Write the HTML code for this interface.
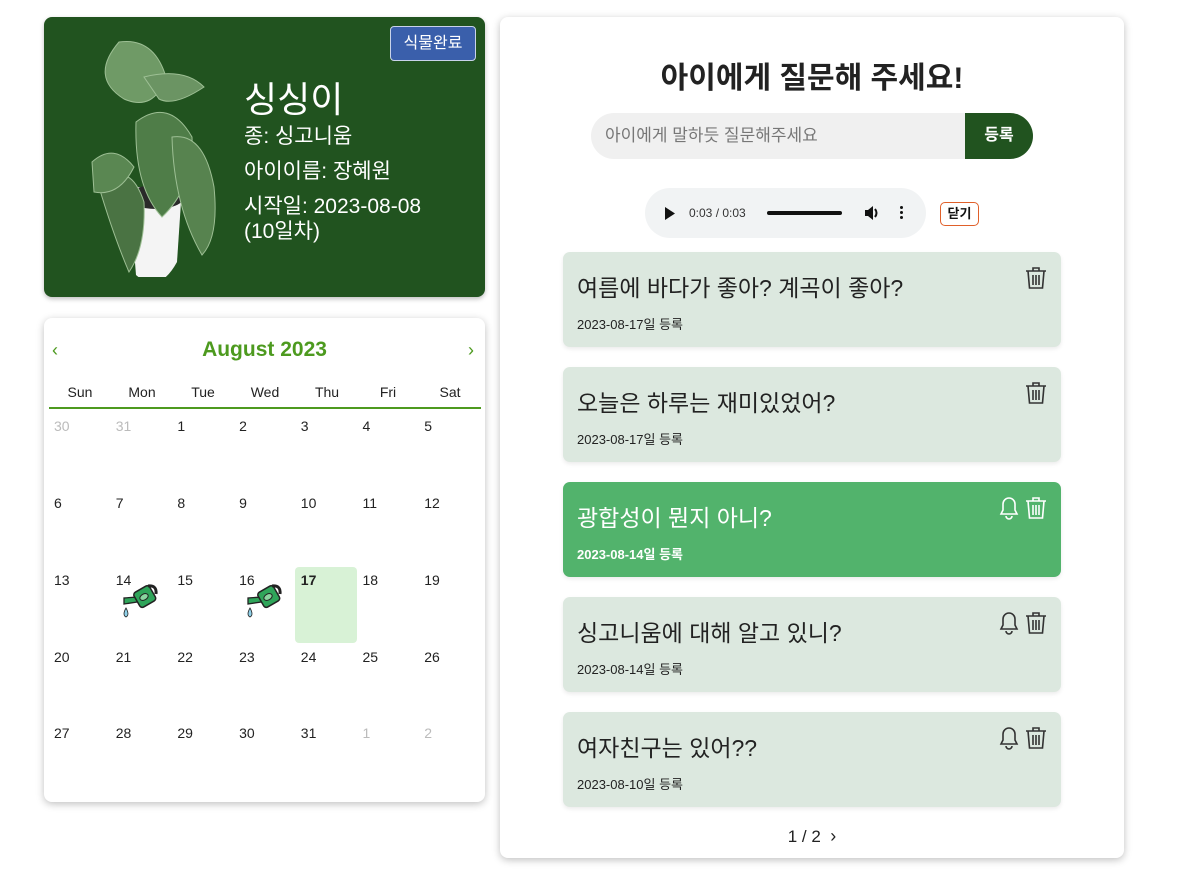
<!DOCTYPE html>
<html><head><meta charset="utf-8"><style>
*{box-sizing:border-box;margin:0;padding:0}
body{width:1198px;height:883px;background:#fff;font-family:"Liberation Sans","Noto Sans CJK KR",sans-serif;position:relative;overflow:hidden;color:#222}
.abs{position:absolute}
.card1{left:44px;top:17px;width:441px;height:280px;background:#21531f;border-radius:8px;box-shadow:0 2px 5px rgba(0,0,0,.25)}
.cal{left:44px;top:318px;width:441px;height:484px;background:#fff;border-radius:8px;box-shadow:0 2px 8px rgba(0,0,0,.25)}
.right{left:500px;top:17px;width:624px;height:841px;background:#fff;border-radius:8px;box-shadow:0 2px 8px rgba(0,0,0,.25)}
.q{left:563px;width:498px;height:95px;background:#dce8df;border-radius:7px;box-shadow:0 2px 4px rgba(0,0,0,.08)}
.q .t{position:absolute;left:14px;top:17px;font-size:23px;color:#222}
.q .d{position:absolute;left:14px;top:62px;font-size:13px;color:#222}
.q.on{background:#52b36c}
.q.on .t,.q.on .d{color:#fff}
.q.on .d{font-weight:bold}
.ic{position:absolute;top:14px}
.num{position:absolute;font-size:14px;color:#222}
.dh{position:absolute;top:384px;font-size:14px;color:#222;width:62px;text-align:center}
</style></head><body>
<div class="abs card1">
<svg class="abs" style="left:30px;top:20px" width="150" height="240" viewBox="0 0 150 240">
<path d="M55 150 L108 150 L103 225 Q85 258 62 238 Z" fill="#f4f4f4"/>
<ellipse cx="82" cy="160" rx="28" ry="12" fill="#2a2a2a"/>
<g stroke="#9dbf94" stroke-width="1">
<path d="M45 5 Q80 0 92 40 Q80 75 50 62 Q15 40 45 5Z" fill="#6f9a66"/>
<path d="M70 40 Q110 30 130 50 Q100 70 85 62Z" fill="#6b9463"/>
<path d="M62 85 Q95 60 118 100 Q120 150 88 180 Q60 150 62 85Z" fill="#4f7d48"/>
<path d="M98 100 Q130 95 140 150 Q145 200 128 218 Q100 170 98 100Z" fill="#57834f"/>
<path d="M25 150 Q55 120 70 165 Q72 210 55 235 Q40 200 25 150Z" fill="#4a7343"/>
<path d="M18 125 Q40 105 60 130 Q45 160 20 155Z" fill="#5a8752"/>
</g></svg>
<div class="abs" style="left:346px;top:9px;width:86px;height:35px;background:#3a5fab;border:1px solid #c9d3ea;border-radius:4px;color:#fff;font-size:16px;text-align:center;line-height:33px">식물완료</div>
<div class="abs" style="left:200px;top:54px;color:#fff;font-size:36px">싱싱이</div>
<div class="abs" style="left:200px;top:102px;color:#fff;font-size:21px;line-height:35px">종: 싱고니움<br>아이이름: 장혜원<br><span style="line-height:25px;display:inline-block;margin-top:5px">시작일: 2023-08-08<br>(10일차)</span></div>
</div>
<div class="abs cal">
<div class="abs" style="left:8px;top:22px;color:#4d9a1f;font-size:18px">‹</div>
<div class="abs" style="left:424px;top:22px;color:#4d9a1f;font-size:18px">›</div>
<div class="abs" style="left:0;width:441px;top:20px;text-align:center;color:#4d9a1f;font-size:21px;font-weight:bold">August 2023</div>
<div class="abs" style="left:5px;top:89px;width:432px;height:2px;background:#4d9a1f"></div>
</div>
<div class="dh" style="left:49px">Sun</div><div class="dh" style="left:111px">Mon</div><div class="dh" style="left:172px">Tue</div><div class="dh" style="left:234px">Wed</div><div class="dh" style="left:296px">Thu</div><div class="dh" style="left:357px">Fri</div><div class="dh" style="left:419px">Sat</div>
<div class="abs" style="left:295px;top:567px;width:62px;height:76px;background:#d8f2d6;border-radius:4px"></div>
<div id="nums"></div>
<svg class="abs" style="left:121px;top:582px" width="40" height="42" viewBox="0 0 40 42"><path d="M3 16 L3 22 L16 20 L17 15 Z" fill="#2fa55a" stroke="#222" stroke-width="1.3"/><rect x="15" y="6" width="18" height="17" rx="3" transform="rotate(-30 24 15)" fill="#2fa55a" stroke="#222" stroke-width="1.5"/><path d="M27 4 Q36 3 35 12" stroke="#222" stroke-width="3" fill="none"/><ellipse cx="23" cy="15" rx="4.5" ry="3" transform="rotate(-30 23 15)" fill="#8ad59f" stroke="#222"/><path d="M5 26 Q1 33 5 35 Q9 33 5 26Z" fill="#8fd0e8" stroke="#222" stroke-width=".8"/></svg>
<svg class="abs" style="left:245px;top:582px" width="40" height="42" viewBox="0 0 40 42"><path d="M3 16 L3 22 L16 20 L17 15 Z" fill="#2fa55a" stroke="#222" stroke-width="1.3"/><rect x="15" y="6" width="18" height="17" rx="3" transform="rotate(-30 24 15)" fill="#2fa55a" stroke="#222" stroke-width="1.5"/><path d="M27 4 Q36 3 35 12" stroke="#222" stroke-width="3" fill="none"/><ellipse cx="23" cy="15" rx="4.5" ry="3" transform="rotate(-30 23 15)" fill="#8ad59f" stroke="#222"/><path d="M5 26 Q1 33 5 35 Q9 33 5 26Z" fill="#8fd0e8" stroke="#222" stroke-width=".8"/></svg>
<div class="abs right">
<div class="abs" style="left:0;width:624px;top:36px;text-align:center;font-size:30px;font-weight:bold;color:#222">아이에게 질문해 주세요!</div>
<div class="abs" style="left:91px;top:96px;width:375px;height:46px;background:#f0f0f0;border-radius:23px 0 0 23px;color:#777;font-size:17px;line-height:46px;padding-left:14px">아이에게 말하듯 질문해주세요</div>
<div class="abs" style="left:465px;top:96px;width:68px;height:46px;background:#21531f;border-radius:0 23px 23px 0;color:#fff;font-size:16px;font-weight:bold;line-height:46px;text-align:center">등록</div>
<div class="abs" style="left:145px;top:171px;width:281px;height:50px;background:#f1f3f4;border-radius:25px">
<svg class="abs" style="left:19px;top:19px" width="12" height="13"><path d="M1 0 L11 6.5 L1 13Z" fill="#111"/></svg>
<div class="abs" style="left:44px;top:18px;font-size:12px;color:#333">0:03 / 0:03</div>
<div class="abs" style="left:122px;top:23px;width:75px;height:4px;background:#111;border-radius:2px"></div>
<svg class="abs" style="left:219px;top:17px" width="16" height="16" viewBox="0 0 16 16"><path d="M1 5h3l5-4v14l-5-4H1Z" fill="#111"/><path d="M11 4q3 4 0 8" stroke="#111" stroke-width="2" fill="none"/></svg>
<div class="abs" style="left:255px;top:18px;width:3px;line-height:5px;font-size:0"><div style="width:3px;height:3px;background:#111;border-radius:50%;margin-bottom:2px"></div><div style="width:3px;height:3px;background:#111;border-radius:50%;margin-bottom:2px"></div><div style="width:3px;height:3px;background:#111;border-radius:50%"></div></div>
</div>
<div class="abs" style="left:440px;top:185px;width:39px;height:24px;border:1px solid #e0602a;border-radius:5px;font-size:13px;font-weight:bold;text-align:center;line-height:22px;color:#111">닫기</div>
<div class="abs" style="left:0;width:624px;top:809px;text-align:center;font-size:17px;color:#222">1 / 2 &nbsp;<span style="font-size:18px">›</span></div>
</div>
<div id="qs"></div>
<script>
var n=document.getElementById('nums'),h='';
var rows=[[30,31,1,2,3,4,5],[6,7,8,9,10,11,12],[13,14,15,16,17,18,19],[20,21,22,23,24,25,26],[27,28,29,30,31,1,2]];
var ys=[418,495,572,649,725];
rows.forEach(function(r,i){r.forEach(function(d,j){var g=(i==0&&j<2)||(i==4&&j>4);h+='<div class="num" style="left:'+(54+j*61.7)+'px;top:'+ys[i]+'px;color:'+(g?'#bbb':'#222')+(d==17&&i==2?';font-weight:bold':'')+'">'+d+'</div>';});});
n.innerHTML=h;
var trash='<svg class="ic" style="right:14px" width="22" height="24" viewBox="0 0 22 24" fill="none" stroke="COL" stroke-width="1.6"><path d="M1 5h20M8 5V2h6v3M3 5l1.5 17h13L19 5M8 9v10M11 9v10M14 9v10"/></svg>';
var bell='<svg class="ic" style="right:42px" width="20" height="24" viewBox="0 0 20 24" fill="none" stroke="COL" stroke-width="1.6"><path d="M10 2a6 6 0 0 0-6 6v6l-2 4h16l-2-4V8a6 6 0 0 0-6-6ZM7 20a3 3 0 0 0 6 0"/></svg>';
var qs=[["여름에 바다가 좋아? 계곡이 좋아?","2023-08-17",0,0],["오늘은 하루는 재미있었어?","2023-08-17",0,0],["광합성이 뭔지 아니?","2023-08-14",1,1],["싱고니움에 대해 알고 있니?","2023-08-14",1,0],["여자친구는 있어??","2023-08-10",1,0]];
var o='';qs.forEach(function(q,i){var c=q[3]?'#fff':'#333';o+='<div class="abs q'+(q[3]?' on':'')+'" style="top:'+(252+i*115)+'px"><div class="t">'+q[0]+'</div><div class="d">'+q[1]+'일 등록</div>'+trash.replace('COL',c)+(q[2]?bell.replace('COL',c):'')+'</div>';});
document.getElementById('qs').innerHTML=o;
</script>
</body></html>
